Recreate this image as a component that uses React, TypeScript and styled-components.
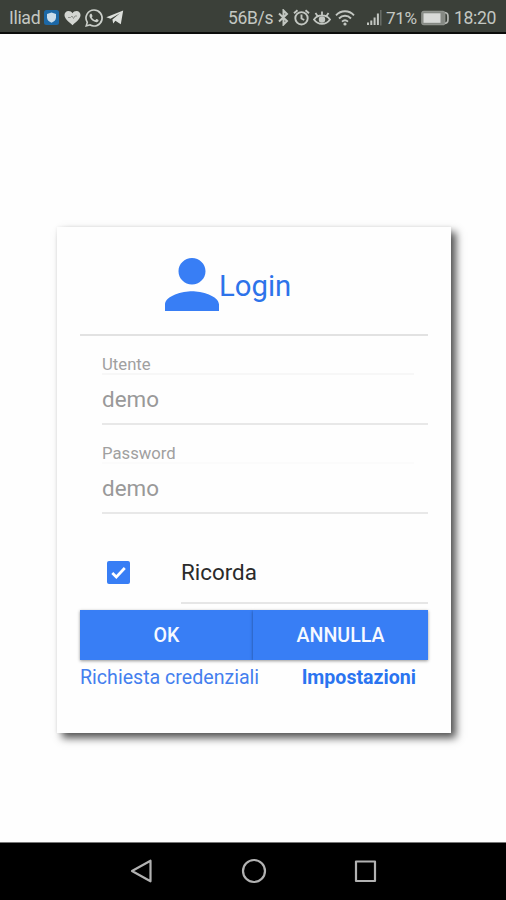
import React from "react";
import styled, { createGlobalStyle } from "styled-components";

const GlobalStyle = createGlobalStyle`
  *, *::before, *::after { box-sizing: border-box; }
  body { margin: 0; background: #fefefe; font-family: Roboto, "Liberation Sans", sans-serif; }
  svg { display: block; flex: none; }
`;

const Screen = styled.div`
  width: 506px;
  height: 900px;
  display: flex;
  flex-direction: column;
  background: #fefefe;
  overflow: hidden;
`;

const StatusBar = styled.header`
  height: 34px;
  flex: none;
  display: flex;
  align-items: center;
  justify-content: space-between;
  padding: 3px 10px 0 9px;
  background: #3b4039;
  border-bottom: 2px solid #0b0d0b;
  color: #c3c7c2;
`;

const StatusGroup = styled.div`
  display: flex;
  align-items: center;
`;

const StatusText = styled.span<{ $width: number; $size: number; $left?: number }>`
  width: ${(p) => p.$width}px;
  margin-left: ${(p) => p.$left ?? 0}px;
  font-size: ${(p) => p.$size}px;
  letter-spacing: -0.35px;
  line-height: 22px;
  white-space: nowrap;
`;

const StatusIcon = styled.svg<{ $left: number }>`
  margin-left: ${(p) => p.$left}px;
`;

const Content = styled.main`
  flex: 1;
  padding: 193px 55px 0 57px;
`;

const Card = styled.form`
  width: 394px;
  height: 506px;
  padding: 0 23px;
  display: flex;
  flex-direction: column;
  background: #fefefe;
  box-shadow: 5px 5px 8px 0 rgba(0, 0, 0, 0.68), 0 0 3px rgba(0, 0, 0, 0.06);
`;

const CardHeader = styled.div`
  height: 109px;
  flex: none;
  display: flex;
  align-items: flex-start;
  padding: 31px 0 0 85px;
  border-bottom: 2px solid #e2e2e2;
`;

const Title = styled.h1`
  margin: 10px 0 0 0;
  font-size: 29.3px;
  font-weight: 400;
  line-height: 36px;
  color: #2d73ea;
`;

const Field = styled.label`
  height: 89px;
  flex: none;
  display: flex;
  flex-direction: column;
  margin-left: 22px;
  border-bottom: 2px solid #e8e8e8;
`;

const FieldLabel = styled.span<{ $line: string }>`
  margin: 19px 14px 0 0;
  height: 20px;
  font-size: 16.7px;
  line-height: 19px;
  color: #a0a0a0;
  border-bottom: 2px solid ${(p) => p.$line};
`;

const FieldInput = styled.input`
  width: 100%;
  height: 34px;
  margin-top: 7px;
  padding: 0;
  border: 0;
  outline: 0;
  background: transparent;
  font: 400 22.4px/34px Roboto, "Liberation Sans", sans-serif;
  color: #999;
`;

const Remember = styled.label`
  height: 90px;
  flex: none;
  display: grid;
  grid-template-columns: 101px 1fr;
`;

const CheckCell = styled.span`
  padding: 47px 0 0 27px;
`;

const RememberText = styled.span`
  padding-top: 43px;
  font-size: 22.4px;
  line-height: 30px;
  color: #2b2b2b;
  border-bottom: 2px solid #e6e6e6;
`;

const Buttons = styled.div`
  height: 50px;
  flex: none;
  margin-top: 6px;
  display: grid;
  grid-template-columns: 173px 175px;
`;

const Button = styled.button`
  border: 0;
  padding: 1px 0 0;
  background: #387ef5;
  box-shadow: 0 1px 3px rgba(0, 0, 0, 0.42);
  font: 500 19.6px/24px Roboto, "Liberation Sans", sans-serif;
  color: #f6f9ff;
`;

const Links = styled.div`
  display: flex;
  justify-content: space-between;
  padding: 6px 12px 0 0;
`;

const Link = styled.a<{ $bold?: boolean }>`
  font-size: 19.6px;
  line-height: 24px;
  font-weight: ${(p) => (p.$bold ? 700 : 400)};
  color: ${(p) => (p.$bold ? "#2a74f0" : "#447fee")};
  white-space: nowrap;
`;

const NavBar = styled.nav`
  height: 58px;
  flex: none;
  display: flex;
  justify-content: center;
  align-items: center;
  gap: 86px;
  padding: 0 0 2px 1px;
  background: #000;
  border-top: 1px solid #777;
`;

const NavIcon = styled.svg`
  width: 26px;
  height: 26px;
  fill: none;
  stroke: #b2b2b2;
  stroke-width: 2.2px;
  stroke-linejoin: round;
`;

const stroke = { fill: "none", stroke: "#c3c7c2" } as const;

export default function App() {
  return (
    <>
      <GlobalStyle />
      <Screen>
        <StatusBar>
          <StatusGroup>
            <StatusText $width={32} $size={17.700}>Iliad</StatusText>
            <StatusIcon $left={3} width="15" height="15" viewBox="0 0 15 15">
              <rect width="15" height="15" rx="2.5" fill="#1c68a6" />
              <path d="M7.5 2.5 12 4v3.500c0 2.600-2 4.200-4.500 5.200C5 11.700 3 10.100 3 7.500V4Z" fill="#c9dcea" />
            </StatusIcon>
            <StatusIcon $left={5} width="17" height="16" viewBox="0 0 17 16">
              <path d="M8.5 15.2C3.5 11 .5 8.300.5 5.100.5 2.700 2.200 1 4.500 1 6.300 1 7.600 1.900 8.500 3.200 9.400 1.900 10.700 1 12.500 1c2.300 0 4 1.700 4 4.100 0 3.200-3 5.900-8 10.100Z" fill="#d3d6d2" />
              <path d="M4 7.500h2.500L8 6l1.500 2.500L11 6h2" fill="none" stroke="#8d918b" strokeWidth="1" />
            </StatusIcon>
            <StatusIcon $left={4} width="18" height="18" viewBox="0 0 24 24">
              <path fill="#cbcfca" d="M17.472 14.382c-.297-.149-1.758-.867-2.030-.967-.273-.099-.471-.148-.670.150-.197.297-.767.966-.940 1.164-.173.199-.347.223-.644.075-.297-.150-1.255-.463-2.390-1.475-.883-.788-1.480-1.761-1.653-2.059-.173-.297-.018-.458.130-.606.134-.133.298-.347.446-.520.149-.174.198-.298.298-.497.099-.198.050-.371-.025-.520-.075-.149-.669-1.612-.916-2.207-.242-.579-.487-.500-.669-.510-.173-.008-.371-.010-.570-.010-.198 0-.520.074-.792.372-.272.297-1.040 1.016-1.040 2.479 0 1.462 1.065 2.875 1.213 3.074.149.198 2.096 3.200 5.077 4.487.709.306 1.262.489 1.694.625.712.227 1.360.195 1.871.118.571-.085 1.758-.719 2.006-1.413.248-.694.248-1.289.173-1.413-.074-.124-.272-.198-.570-.347M12 .2A11.800 11.800 0 0 0 1.900 18L.1 24l6.300-1.700A11.800 11.800 0 1 0 12 .2Zm0 2.200a9.600 9.600 0 1 1-5.200 17.700l-3.600.9 1-3.500A9.600 9.600 0 0 1 12 2.400Z" />
            </StatusIcon>
            <StatusIcon $left={3} width="18" height="15" viewBox="0 0 18 15">
              <path d="M.3 7.200 17.200.6 14.800 14.300 9.400 10.700 7.200 13.600 6.400 9.500 14 3.300 4.500 8.800Z" fill="#dde0dc" />
            </StatusIcon>
          </StatusGroup>
          <StatusGroup>
            <StatusText $width={47} $size={17.500}>56B/s</StatusText>
            <StatusIcon $left={3} width="11" height="17" viewBox="0 0 11 17" {...stroke} strokeWidth="2">
              <path d="M1 4.500 9 12 5.500 15.500V1.500L9 5 1 12.500" />
            </StatusIcon>
            <StatusIcon $left={4} width="17" height="17" viewBox="0 0 17 17" {...stroke} strokeWidth="1.900">
              <circle cx="8.500" cy="9.300" r="6.200" />
              <path d="M8.500 5.500v4l2.700 1.500M1 4.200 4.500 1.200M16 4.200 12.500 1.200" />
            </StatusIcon>
            <StatusIcon $left={3} width="18" height="16" viewBox="0 0 18 16" {...stroke} strokeWidth="1.800">
              <path d="M1 9.500C5 4 13 4 17 9.500 13 15.300 5 15.300 1 9.500ZM9 5V1.500M4.500 6 2.500 3M13.500 6l2-3" />
              <circle cx="9" cy="9.500" r="2.300" fill="#c3c7c2" />
            </StatusIcon>
            <StatusIcon $left={4} width="20" height="16" viewBox="0 0 20 16" {...stroke} strokeWidth="1.900">
              <path d="M1 5.300C6-.1 14-.1 19 5.300M4 8.500c3.500-3.600 8.500-3.600 12 0M7 11.600c2-1.700 4-1.700 6 0" />
              <circle cx="10" cy="14" r="1.600" fill="#c3c7c2" stroke="none" />
            </StatusIcon>
            <StatusIcon $left={12} width="17" height="16" viewBox="0 0 17 16">
              <path d="M0 12.500h2V15H0zM3.300 10.500h2V15h-2zM6.600 7.500h2V15h-2zM9.900 3.500h2V15h-2z" fill="#c3c7c2" />
              <path d="M13.800 0v15.500" stroke="#6d716b" strokeWidth="1.400" />
            </StatusIcon>
            <StatusText $width={34} $size={17.200} $left={2}>71%</StatusText>
            <StatusIcon $left={1} width="28" height="16" viewBox="0 0 28 16">
              <rect x=".8" y="1.300" width="23" height="13.400" rx="2" fill="#858983" stroke="#8f938d" strokeWidth="1.200" />
              <rect x="2.500" y="3.300" width="17" height="9.500" fill="#d8dad7" />
              <path d="M24 2.500c2.800.8 3 1.500 3 5.500s-.2 4.700-3 5.500" fill="none" stroke="#b7bab5" strokeWidth="1.700" />
            </StatusIcon>
            <StatusText $width={42} $size={17.600} $left={5}>18:20</StatusText>
          </StatusGroup>
        </StatusBar>

        <Content>
          <Card onSubmit={(e) => e.preventDefault()}>
            <CardHeader>
              <svg width="54" height="53" viewBox="4 4 16 16" preserveAspectRatio="none" fill="#387ef5">
                <path d="M12 12c2.210 0 4-1.790 4-4s-1.790-4-4-4-4 1.790-4 4 1.790 4 4 4zm0 2c-2.670 0-8 1.340-8 4v2h16v-2c0-2.660-5.330-4-8-4z" />
              </svg>
              <Title>Login</Title>
            </CardHeader>
            <Field>
              <FieldLabel $line="#f7f7f7">Utente</FieldLabel>
              <FieldInput defaultValue="demo" />
            </Field>
            <Field>
              <FieldLabel $line="#fbfbfb">Password</FieldLabel>
              <FieldInput defaultValue="demo" />
            </Field>
            <Remember>
              <CheckCell>
                <svg width="23" height="23" viewBox="0 0 23 23">
                  <rect width="23" height="23" rx="2" fill="#387ef5" />
                  <path d="m5.300 12 4 4 8.500-9" fill="none" stroke="#fff" strokeWidth="2.700" />
                </svg>
              </CheckCell>
              <RememberText>Ricorda</RememberText>
            </Remember>
            <Buttons>
              <Button type="submit">OK</Button>
              <Button type="button">ANNULLA</Button>
            </Buttons>
            <Links>
              <Link>Richiesta credenziali</Link>
              <Link $bold>Impostazioni</Link>
            </Links>
          </Card>
        </Content>

        <NavBar>
          <NavIcon viewBox="0 0 26 26">
            <path d="M3 13 21.500 2.700V23.300Z" />
          </NavIcon>
          <NavIcon viewBox="0 0 26 26">
            <circle cx="13" cy="13" r="11" />
          </NavIcon>
          <NavIcon viewBox="0 0 26 26">
            <rect x="3" y="3.500" width="19" height="19.500" />
          </NavIcon>
        </NavBar>
      </Screen>
    </>
  );
}
